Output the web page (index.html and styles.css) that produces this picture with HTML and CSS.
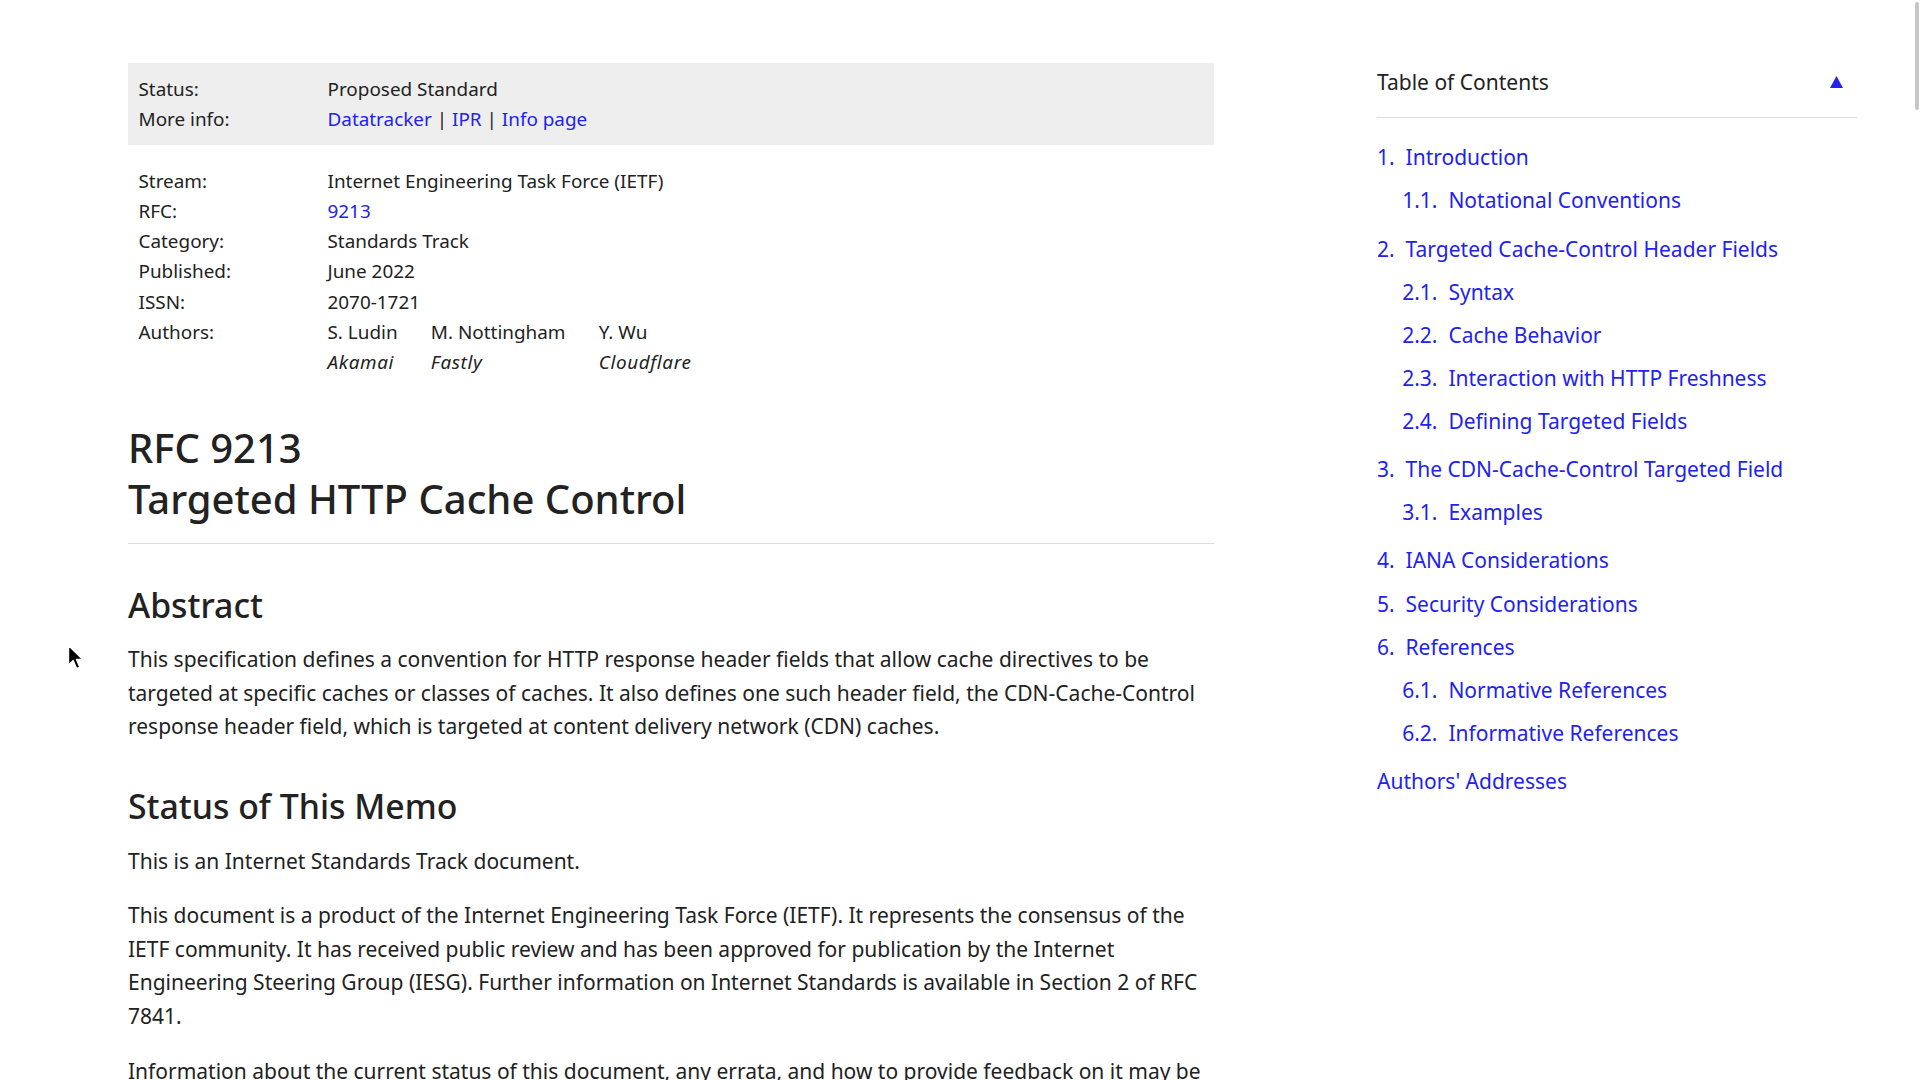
FILE: index.html
```html
<!DOCTYPE html>
<html lang="en">
<head>
<meta charset="utf-8">
<title>RFC 9213: Targeted HTTP Cache Control</title>
<link rel="stylesheet" href="styles.css">
</head>
<body>
<div class="page">
  <main class="doc">
    <div class="ext-meta">
      <dl class="meta">
        <dt>Status:</dt><dd>Proposed Standard</dd>
        <dt>More info:</dt><dd><a href="#">Datatracker</a> | <a href="#">IPR</a> | <a href="#">Info page</a></dd>
      </dl>
    </div>
    <div class="int-meta">
      <dl class="meta">
        <dt>Stream:</dt><dd>Internet Engineering Task Force (IETF)</dd>
        <dt>RFC:</dt><dd><a href="#">9213</a></dd>
        <dt>Category:</dt><dd>Standards Track</dd>
        <dt>Published:</dt><dd>June 2022</dd>
        <dt>ISSN:</dt><dd>2070-1721</dd>
        <dt>Authors:</dt>
        <dd class="authors">
          <div class="author"><div class="name">S. Ludin</div><div class="org">Akamai</div></div>
          <div class="author"><div class="name">M. Nottingham</div><div class="org">Fastly</div></div>
          <div class="author"><div class="name">Y. Wu</div><div class="org">Cloudflare</div></div>
        </dd>
      </dl>
    </div>
    <h1 class="title"><span class="line">RFC 9213</span><span class="line">Targeted HTTP Cache Control</span></h1>
    <section>
      <h2>Abstract</h2>
      <p>This specification defines a convention for HTTP response header fields that allow cache directives to be targeted at specific caches or classes of caches. It also defines one such header field, the CDN-Cache-Control response header field, which is targeted at content delivery network (CDN) caches.</p>
    </section>
    <section>
      <h2>Status of This Memo</h2>
      <p>This is an Internet Standards Track document.</p>
      <p>This document is a product of the Internet Engineering Task Force (IETF). It represents the consensus of the IETF community. It has received public review and has been approved for publication by the Internet Engineering Steering Group (IESG). Further information on Internet Standards is available in Section 2 of RFC 7841.</p>
      <p>Information about the current status of this document, any errata, and how to provide feedback on it may be obtained at <a href="#">https://www.rfc-editor.org/info/rfc9213</a>.</p>
    </section>
  </main>
  <aside class="toc">
    <h2 class="toc-head">Table of Contents
      <a href="#" class="toplink" aria-label="Back to top"><svg width="13" height="12" viewBox="0 0 13 12"><polygon points="6.5,0 13,12 0,12" fill="#22e"/></svg></a>
    </h2>
    <nav class="toc-nav">
      <ul>
        <li><a href="#">1.&nbsp; Introduction</a>
          <ul>
            <li><a href="#">1.1.&nbsp; Notational Conventions</a></li>
          </ul>
        </li>
        <li><a href="#">2.&nbsp; Targeted Cache-Control Header Fields</a>
          <ul>
            <li><a href="#">2.1.&nbsp; Syntax</a></li>
            <li><a href="#">2.2.&nbsp; Cache Behavior</a></li>
            <li><a href="#">2.3.&nbsp; Interaction with HTTP Freshness</a></li>
            <li><a href="#">2.4.&nbsp; Defining Targeted Fields</a></li>
          </ul>
        </li>
        <li><a href="#">3.&nbsp; The CDN-Cache-Control Targeted Field</a>
          <ul>
            <li><a href="#">3.1.&nbsp; Examples</a></li>
          </ul>
        </li>
        <li><a href="#">4.&nbsp; IANA Considerations</a></li>
        <li><a href="#">5.&nbsp; Security Considerations</a></li>
        <li><a href="#">6.&nbsp; References</a>
          <ul>
            <li><a href="#">6.1.&nbsp; Normative References</a></li>
            <li><a href="#">6.2.&nbsp; Informative References</a></li>
          </ul>
        </li>
        <li><a href="#">Authors' Addresses</a></li>
      </ul>
    </nav>
  </aside>
</div>
<div class="scroll-thumb"></div>
<svg class="cursor" width="18" height="27" viewBox="0 0 18 27"><path d="M1.5,1.5 L1.5,21 L6.2,16.6 L9.6,24.6 L12.8,23.2 L9.5,15.4 L15.8,15.4 Z" fill="#000" stroke="#fff" stroke-width="1.4" stroke-linejoin="round"/></svg>
</body>
</html>
```

FILE: styles.css
```css
* {
  box-sizing: border-box;
}

html {
  overflow: hidden;
}

body {
  margin: 0;
  font-family: "Noto Sans", "Liberation Sans", Arial, sans-serif;
  font-size: 21px;
  line-height: 1.6;
  color: #222;
  background: #fff;
}

a {
  color: #22e;
  text-decoration: none;
}

.page {
  display: flex;
  align-items: flex-start;
  padding: 63px 0 0 128px;
}

.doc {
  width: 1086px;
  flex: none;
}

.ext-meta {
  background: #eee;
  padding: 10.5px;
  margin-bottom: 10.5px;
}

.int-meta {
  padding: 10.5px;
}

.meta {
  display: grid;
  grid-template-columns: 189px auto;
  margin: 0;
  font-size: 18.9px;
  line-height: 1.6;
}

.meta dt,
.meta dd {
  margin: 0;
}

.author {
  display: inline-block;
  vertical-align: top;
  margin-right: 28.35px;
}

.org {
  font-style: italic;
  letter-spacing: 0.6px;
}

.title {
  font-size: 40px;
  font-weight: 500;
  line-height: 50.7px;
  margin: 0 0 19.5px;
  padding: 35.5px 0 18.5px;
  border-bottom: 1px solid #ddd;
}

.title .line {
  display: block;
}

h2 {
  font-size: 33.8px;
  font-weight: 500;
  line-height: 42.9px;
  margin: -30px 0 16.5px;
  padding-top: 50.2px;
}

p {
  margin: 0 0 21px;
}

.toc {
  flex: none;
  width: 522px;
  padding: 1px 21px 0;
  margin-left: 142px;
}

.toc-head {
  position: relative;
  font-size: 21px;
  font-weight: 400;
  line-height: 1.3;
  margin: 0;
  padding: 5.25px 21px 20px 0;
  border-bottom: 1px solid #ddd;
}

.toplink {
  position: absolute;
  right: 14px;
  top: 12px;
  display: block;
  width: 13px;
  height: 12px;
  line-height: 0;
}

.toc-nav {
  padding-top: 11px;
}

.toc-nav ul {
  list-style: none;
  margin: 0;
  padding: 0;
}

.toc-nav li {
  line-height: 1.3;
  margin: 15.75px 0;
  padding-left: 25.2px;
  text-indent: -25.2px;
}

.toc-nav li ul {
  margin-bottom: 21px;
}

.scroll-thumb {
  position: fixed;
  right: 1px;
  top: 2px;
  width: 4px;
  height: 108px;
  border-radius: 2px;
  background: #c6c6c6;
}

.cursor {
  position: fixed;
  left: 67px;
  top: 644px;
}
```
